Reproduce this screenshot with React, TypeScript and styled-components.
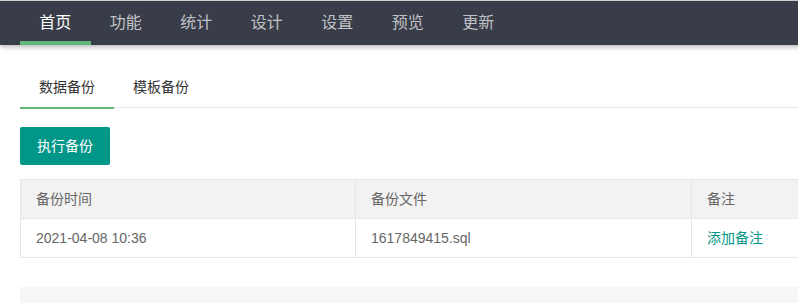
import React from "react";
import styled, { createGlobalStyle } from "styled-components";

const Global = createGlobalStyle`
  html, body { margin: 0; padding: 0; background: #fff; overflow: hidden; }
  body {
    font-family: "Liberation Sans", "Noto Sans CJK SC", sans-serif;
    font-size: 14px;
    color: #666;
  }
  * { box-sizing: border-box; }
`;

const Page = styled.div`
  width: 1048px;
  border-top: 1px solid #d8d8d8;
`;

const NavBar = styled.ul`
  display: flex;
  margin: 0;
  padding: 0 0 0 20px;
  list-style: none;
  height: 44px;
  background: #393d49;
  box-shadow: 0 2px 5px rgba(0, 0, 0, 0.28);
  position: relative;
  z-index: 1;
`;

const NavItem = styled.li<{ $active?: boolean }>`
  position: relative;
  padding: 0 19.25px;
  height: 44px;
  line-height: 44px;
  font-size: 16px;
  color: ${(p) => (p.$active ? "#fff" : "rgba(255,255,255,0.7)")};
  &::after {
    content: "";
    display: ${(p) => (p.$active ? "block" : "none")};
    position: absolute;
    left: 0;
    right: 0;
    bottom: 0;
    height: 4px;
    background: #5fb878;
  }
`;

const Main = styled.div`
  padding: 22px 20px 0 20px;
`;

const TabTitle = styled.ul`
  display: flex;
  margin: 0;
  padding: 0;
  list-style: none;
  height: 41px;
  border-bottom: 1px solid #e6e6e6;
`;

const Tab = styled.li<{ $active?: boolean }>`
  position: relative;
  padding: 0 19px;
  line-height: 40px;
  height: 40px;
  color: #333;
  &::after {
    content: "";
    display: ${(p) => (p.$active ? "block" : "none")};
    position: absolute;
    left: 0;
    right: 0;
    bottom: -2px;
    height: 2px;
    background: #5fb878;
  }
`;

const Toolbar = styled.div`
  padding-top: 19px;
`;

const Button = styled.button`
  height: 38px;
  line-height: 38px;
  padding: 0 17px;
  border: none;
  border-radius: 2px;
  background: #009688;
  color: #fff;
  font-family: inherit;
  font-size: 14px;
`;

const Table = styled.table`
  margin-top: 14px;
  width: 1008px;
  table-layout: fixed;
  border-collapse: collapse;
  border: 1px solid #e6e6e6;
`;

const Th = styled.th`
  background: #f2f2f2;
  font-weight: normal;
  text-align: left;
  padding: 9px 15px;
  line-height: 20px;
  border: 1px solid #e6e6e6;
  color: #666;
`;

const Td = styled.td`
  padding: 9px 15px;
  line-height: 20px;
  border: 1px solid #e6e6e6;
  color: #666;
`;

const Link = styled.a`
  color: #009688;
  text-decoration: none;
`;

const Footer = styled.div`
  margin-top: 29px;
  height: 40px;
  background: #f6f6f6;
`;

const navs = ["首页", "功能", "统计", "设计", "设置", "预览", "更新"];

export default function App() {
  return (
    <Page>
      <Global />
      <NavBar>
        {navs.map((n, i) => (
          <NavItem key={n} $active={i === 0}>
            {n}
          </NavItem>
        ))}
      </NavBar>
      <Main>
        <TabTitle>
          <Tab $active>数据备份</Tab>
          <Tab>模板备份</Tab>
        </TabTitle>
        <Toolbar>
          <Button>执行备份</Button>
        </Toolbar>
        <Table>
          <colgroup>
            <col style={{ width: 335 }} />
            <col style={{ width: 336 }} />
            <col style={{ width: 336 }} />
          </colgroup>
          <thead>
            <tr>
              <Th>备份时间</Th>
              <Th>备份文件</Th>
              <Th>备注</Th>
            </tr>
          </thead>
          <tbody>
            <tr>
              <Td>2021-04-08 10:36</Td>
              <Td>1617849415.sql</Td>
              <Td>
                <Link href="#">添加备注</Link>
              </Td>
            </tr>
          </tbody>
        </Table>
        <Footer />
      </Main>
    </Page>
  );
}
